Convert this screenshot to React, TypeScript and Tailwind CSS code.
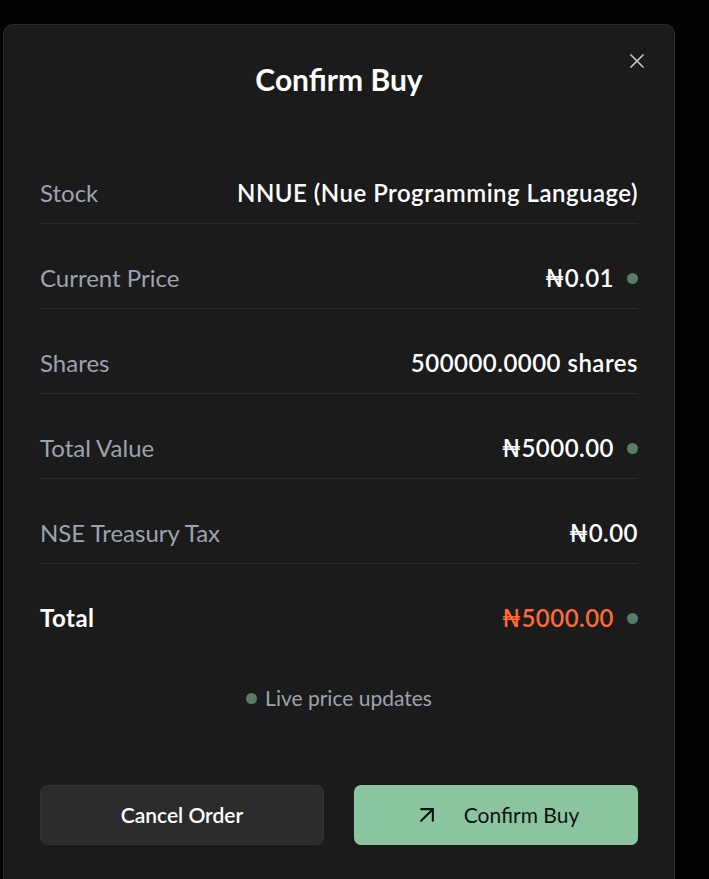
import { ArrowUpRight } from "lucide-react";

type Row = {
    label: string;
    value: string;
    dot?: boolean;
};

const rows: Row[] = [
    { label: "Stock", value: "NNUE (Nue Programming Language)" },
    { label: "Current Price", value: "₦0.01", dot: true },
    { label: "Shares", value: "500000.0000 shares" },
    { label: "Total Value", value: "₦5000.00", dot: true },
    { label: "NSE Treasury Tax", value: "₦0.00" },
];

function LiveDot() {
    return <span className="w-[11px] h-[11px] rounded-full bg-[#5a7c64] shrink-0" />;
}

export default function App() {
    return (
        <div
            className="min-h-screen bg-[#030303] pt-[24px] pl-[3px] overflow-hidden"
            style={{ fontFamily: "Lato, 'Noto Sans', sans-serif" }}
        >
            <div className="relative w-[672px] min-h-[900px] rounded-t-[10px] border border-[#2c2c2c] bg-[#1b1b1b] px-[36px] pt-[36px] pb-[40px]">
                {/* close */}
                <button className="absolute top-[28px] right-[29px] w-[16px] h-[16px] flex items-center justify-center text-[#c4c4c4]">
                    <svg width="14" height="14" viewBox="0 0 14 14" fill="none">
                        <path d="M1 1L13 13M13 1L1 13" stroke="currentColor" strokeWidth="1.7" strokeLinecap="round" />
                    </svg>
                </button>

                <h2 className="text-center text-white text-[30px] leading-[36px] font-bold">Confirm Buy</h2>

                <div className="mt-[66px] flex flex-col gap-[24px]">
                    {rows.map((r) => (
                        <div key={r.label} className="flex items-center justify-between py-[15px] border-b border-[#2b2b2b] text-[24px] leading-[30px]">
                            <span className="text-[#9ca3af]">{r.label}</span>
                            <div className="flex items-center gap-[13px]">
                                <span className="text-white font-semibold tracking-[0.02em]">{r.value}</span>
                                {r.dot && <LiveDot />}
                            </div>
                        </div>
                    ))}
                    <div className="flex items-center justify-between py-[15px] text-[24px] leading-[30px]">
                        <span className="text-white font-bold tracking-[0.02em]">Total</span>
                        <div className="flex items-center gap-[13px]">
                            <span className="text-[#ff6a3d] font-semibold tracking-[0.02em]">₦5000.00</span>
                            <LiveDot />
                        </div>
                    </div>
                </div>

                <div className="mt-[36px] flex items-center justify-center gap-[8px] text-[#9ca3af] text-[21px] leading-[28px]">
                    <LiveDot />
                    <span>Live price updates</span>
                </div>

                <div className="mt-[73px] grid grid-cols-2 gap-[30px]">
                    <button className="h-[60px] rounded-[7px] bg-[#2c2c2c] border border-[#333333] text-white text-[21px] font-semibold">
                        Cancel Order
                    </button>
                    <button className="h-[60px] rounded-[7px] bg-[#8bc5a0] text-[#111111] text-[21px] flex items-center justify-center gap-[23px]">
                        <ArrowUpRight size={28} strokeWidth={1.8} />
                        <span>Confirm Buy</span>
                    </button>
                </div>
            </div>
        </div>
    );
}
